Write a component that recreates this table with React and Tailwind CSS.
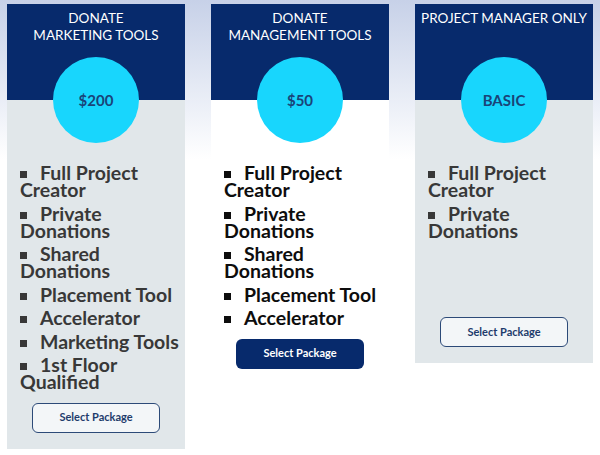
import React from 'react';

const plans = [
  {
    title: ['DONATE', 'MARKETING TOOLS'],
    price: '$200',
    body: 'bg-[#e1e7ea]',
    text: 'text-[#383838]',
    items: ['Full Project Creator', 'Private Donations', 'Shared Donations', 'Placement Tool', 'Accelerator', 'Marketing Tools', '1st Floor Qualified'],
    filled: false,
    height: '',
  },
  {
    title: ['DONATE', 'MANAGEMENT TOOLS'],
    price: '$50',
    body: 'bg-gradient-to-b from-[#eef1f8] to-white to-[25%]',
    text: 'text-[#0d0d0d]',
    items: ['Full Project Creator', 'Private Donations', 'Shared Donations', 'Placement Tool', 'Accelerator'],
    filled: true,
    height: '',
  },
  {
    title: ['PROJECT MANAGER ONLY'],
    price: 'BASIC',
    body: 'bg-[#e1e7ea]',
    text: 'text-[#383838]',
    items: ['Full Project Creator', 'Private Donations'],
    filled: false,
    height: 'h-[359px]',
  },
];

function PlanCard({ plan }) {
  return (
    <div className={`w-[178px] flex flex-col ${plan.body} ${plan.height}`}>
      <div className="h-[96px] bg-[#072a6c] pt-[6px] text-center text-[13.5px] leading-[17px] text-white">
        {plan.title.map((t) => (
          <div key={t}>{t}</div>
        ))}
      </div>
      <div className="mx-auto -mt-[43px] flex h-[86px] w-[86px] items-center justify-center rounded-full bg-[#18d6fd] text-[15px] font-bold text-[#1a4478]">
        {plan.price}
      </div>
      <ul className={`mt-[21px] pl-[13px] pr-[2px] text-[19.5px] font-bold leading-[17px] ${plan.text}`}>
        {plan.items.map((item) => (
          <li key={item} className="mb-[6.5px]">
            <span className="mr-[13px] inline-block h-[7px] w-[7px] bg-current align-[2px]"></span>
            {item}
          </li>
        ))}
      </ul>
      {plan.filled ? (
        <button className="mx-auto mt-[6px] h-[30px] w-[128px] rounded-[6px] bg-[#072a6c] text-[11px] font-bold text-white">
          Select Package
        </button>
      ) : (
        <button className={`mx-auto ${plan.height ? 'mt-auto' : 'mt-[6px]'} mb-[16px] h-[30px] w-[128px] rounded-[6px] border border-[#2c4a78] bg-[#f3f6f8] text-[11px] font-bold text-[#1e3c6c]`}>
          Select Package
        </button>
      )}
    </div>
  );
}

export default function App() {
  return (
    <div
      className="flex h-[455px] w-[600px] items-start gap-[26px] bg-gradient-to-b from-[#c7d1e8] via-white via-[35%] to-white pl-[7px] pt-[4px]"
      style={{ fontFamily: 'Lato, "Open Sans", sans-serif' }}
    >
      {plans.map((p, i) => (
        <PlanCard key={i} plan={p} />
      ))}
    </div>
  );
}
